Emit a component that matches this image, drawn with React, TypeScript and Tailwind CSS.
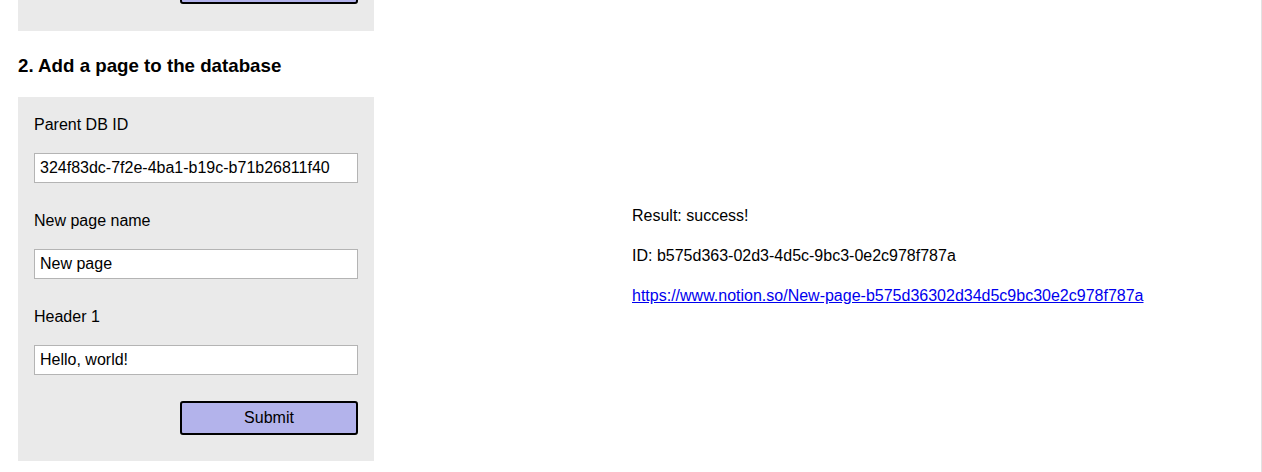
import React from "react";

const fields = [
  { label: "Parent DB ID", value: "324f83dc-7f2e-4ba1-b19c-b71b26811f40" },
  { label: "New page name", value: "New page" },
  { label: "Header 1", value: "Hello, world!" },
];

function SubmitButton({
  className = "",
  label = "Submit",
}: {
  className?: string;
  label?: string;
}) {
  return (
    <button
      type="button"
      aria-label="Submit"
      className={`w-[178px] h-[34px] shrink-0 rounded-[3px] border-2 border-black bg-[#b3b3eb] text-[16px] leading-[18px] text-black ${className}`}
    >
      {label}
    </button>
  );
}

export default function App() {
  return (
    <div className="flex w-full h-[472px] overflow-hidden bg-white text-black font-['Liberation_Sans',Arial,sans-serif]">
      {/* left column: forms */}
      <div className="w-1/2 pl-[18px]">
        {/* tail of the previous form, scrolled out of view */}
        <div className="w-[356px] h-[31px] overflow-hidden bg-[#eaeaea] px-4 flex justify-end">
          <SubmitButton className="-mt-[30px]" label="" />
        </div>

        <h3 className="mt-[24px] mb-[20px] text-[18.72px] leading-[22px] font-bold">
          2. Add a page to the database
        </h3>

        <form className="w-[356px] bg-[#eaeaea] px-4 pt-[19px] pb-[26px] flex flex-col">
          {fields.map((f, i) => (
            <div key={f.label} className={i > 0 ? "mt-[29px]" : ""}>
              <label className="block text-[16px] leading-[18px]">{f.label}</label>
              <input
                readOnly
                value={f.value}
                className="mt-[19px] block w-[324px] h-[30px] border border-[#b4b4b4] bg-white px-[5px] text-[16px] text-black outline-none"
              />
            </div>
          ))}
          <div className="mt-[26px] flex justify-end">
            <SubmitButton />
          </div>
        </form>
      </div>

      {/* right column: result */}
      <div className="w-1/2 border-r border-[#e2e2e2] pl-px pt-[204px] flex flex-col gap-4 text-[16px] leading-[24px]">
        <p>Result: success!</p>
        <p>ID: b575d363-02d3-4d5c-9bc3-0e2c978f787a</p>
        <p>
          <a href="#" className="text-[#0000ee] underline">
            https://www.notion.so/New-page-b575d36302d34d5c9bc30e2c978f787a
          </a>
        </p>
      </div>
    </div>
  );
}
